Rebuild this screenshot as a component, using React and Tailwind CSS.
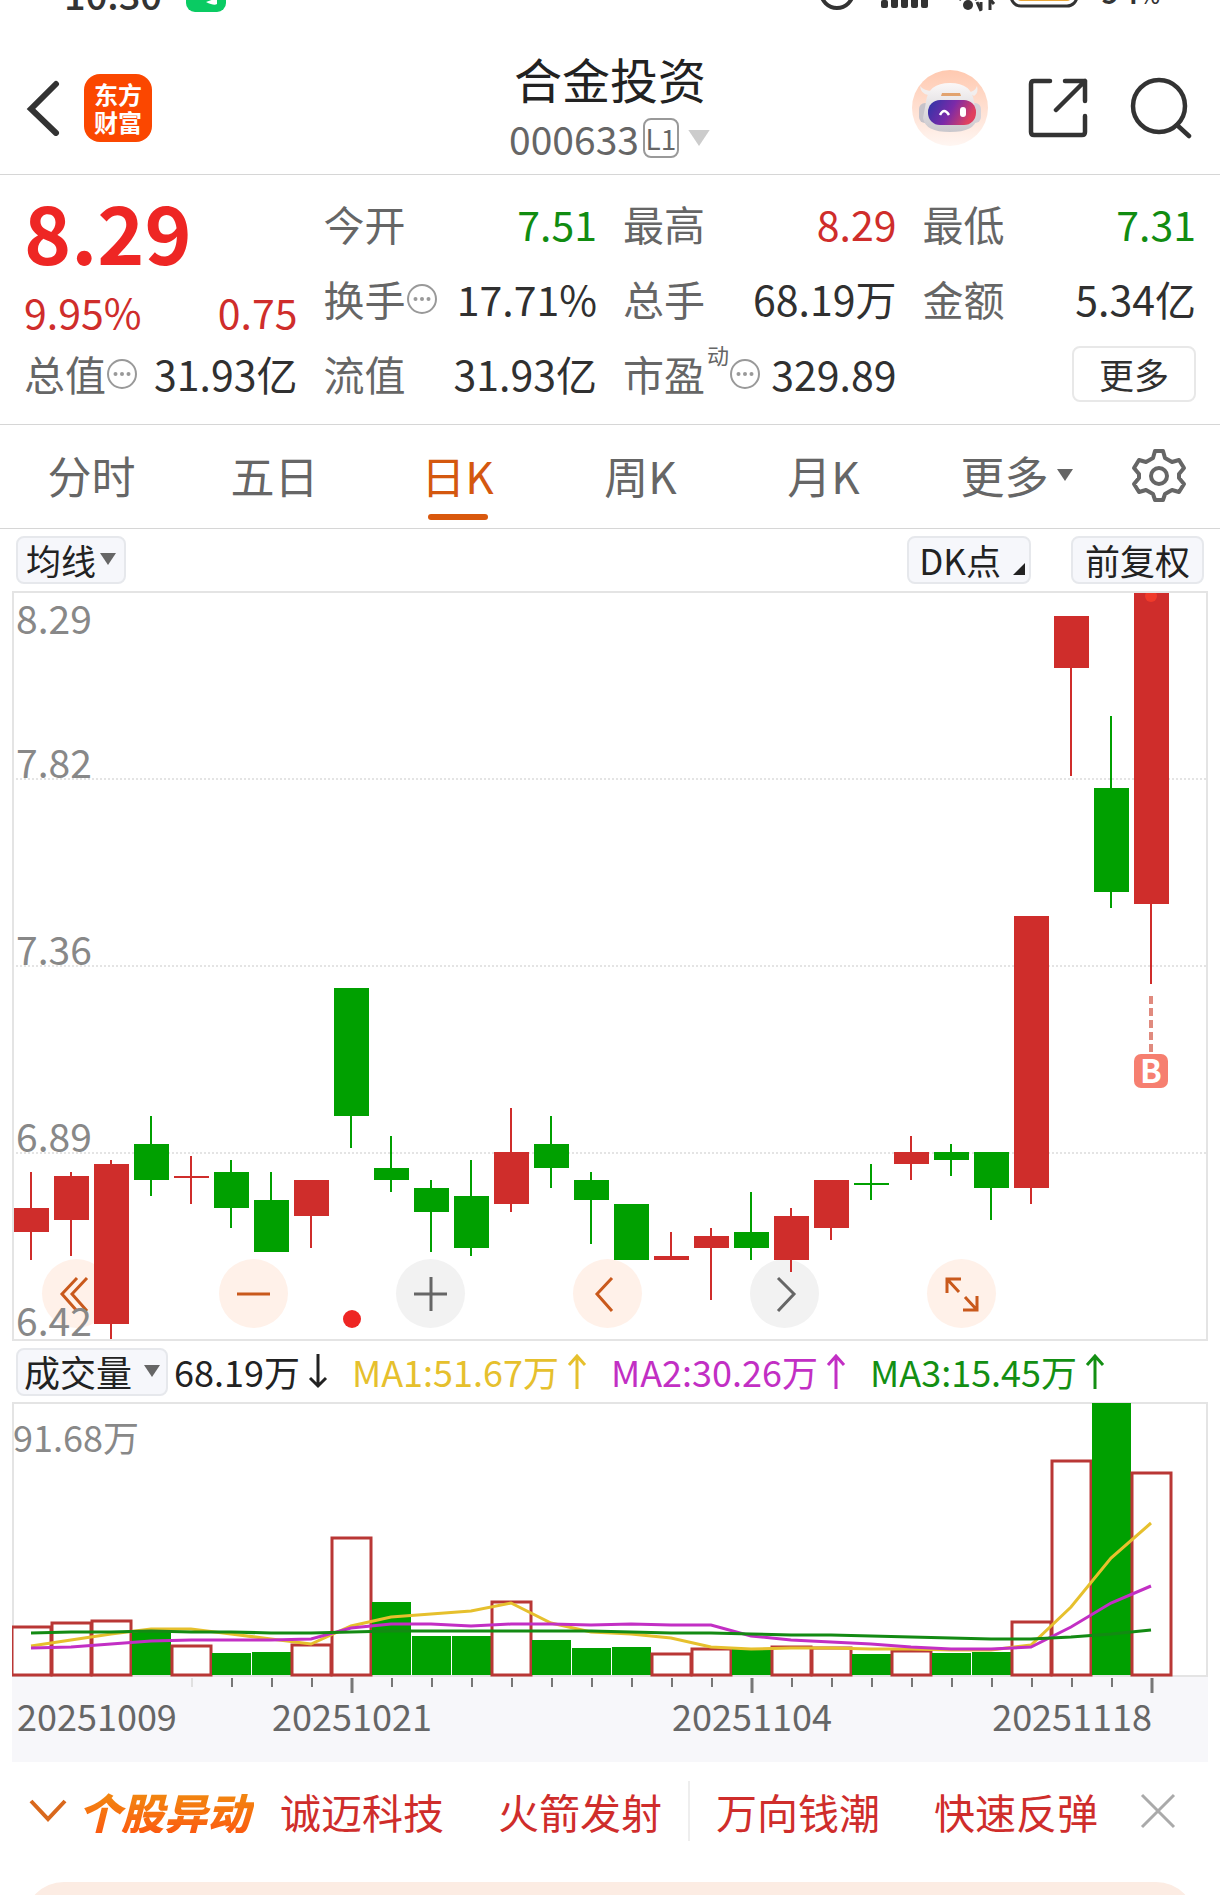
import { useState } from "react";

const RED = "#cf2d2b";
const GREEN = "#00a000";

// [open, close, high, low]
const candles = [
  [6.69, 6.75, 6.84, 6.62],
  [6.72, 6.83, 6.84, 6.63],
  [6.46, 6.86, 6.87, 6.42],
  [6.91, 6.82, 6.98, 6.78],
  [6.83, 6.83, 6.88, 6.76],
  [6.84, 6.75, 6.87, 6.7],
  [6.77, 6.64, 6.84, 6.64],
  [6.73, 6.82, 6.82, 6.65],
  [7.3, 6.98, 7.3, 6.9],
  [6.85, 6.82, 6.93, 6.79],
  [6.8, 6.74, 6.82, 6.64],
  [6.78, 6.65, 6.87, 6.63],
  [6.76, 6.89, 7.0, 6.74],
  [6.91, 6.85, 6.98, 6.8],
  [6.82, 6.77, 6.84, 6.66],
  [6.76, 6.62, 6.76, 6.62],
  [6.62, 6.63, 6.69, 6.62],
  [6.65, 6.68, 6.7, 6.52],
  [6.69, 6.65, 6.79, 6.62],
  [6.62, 6.73, 6.75, 6.59],
  [6.7, 6.82, 6.82, 6.67],
  [6.812, 6.808, 6.86, 6.77],
  [6.86, 6.89, 6.93, 6.82],
  [6.89, 6.87, 6.91, 6.83],
  [6.89, 6.8, 6.89, 6.72],
  [6.8, 7.48, 7.48, 6.76],
  [8.1, 8.23, 8.23, 7.83],
  [7.8, 7.54, 7.98, 7.5],
  [7.51, 8.29, 8.29, 7.31],
];

const volumes = [
  49, 53, 55, 43, 30, 22, 23, 31, 138, 73, 39, 39, 74, 35, 27, 28, 22, 27, 26,
  29, 28, 21, 25, 22, 23, 54, 215, 272, 203,
];

const averages = [
  {
    color: "#e6c02d",
    values: [
      29, 35, 41, 46, 46, 41, 36, 31, 49, 58, 61, 64, 72, 52, 43, 41, 37, 28, 26,
      27, 27, 26, 26, 25, 25, 30, 68, 117, 152,
    ],
  },
  {
    color: "#c22fc4",
    values: [
      27, 28, 31, 34, 35, 35, 35, 36, 47, 51, 51, 49, 51, 51, 50, 51, 50, 50, 39,
      35, 33, 31, 28, 26, 26, 28, 48, 72, 89,
    ],
  },
  {
    color: "#138a13",
    values: [
      42, 43, 43, 44, 43, 43, 42, 42, 43, 44, 44, 44, 44, 44, 44, 43, 42, 42, 41,
      40, 40, 39, 38, 37, 36, 36, 38, 41, 45,
    ],
  },
];

const columns = [
  [
    { label: "今开", value: "7.51", color: "text-[#118c11]" },
    { label: "换手", value: "17.71%", info: true },
    { label: "流值", value: "31.93亿" },
  ],
  [
    { label: "最高", value: "8.29", color: "text-[#cf2d2b]" },
    { label: "总手", value: "68.19万" },
    { label: "市盈", value: "329.89", info: true, sup: "动" },
  ],
  [
    { label: "最低", value: "7.31", color: "text-[#118c11]" },
    { label: "金额", value: "5.34亿" },
  ],
];

const tabs = ["分时", "五日", "日K", "周K", "月K"];

const centerX = (i) => 19 + i * 40;
const priceY = (price) => Math.round((8.29 - price) * 400);

// volume bars are coloured by the change from the previous close
const isUp = (i) => i === 0 || candles[i][1] > candles[i - 1][1];

const InfoIcon = () => (
  <svg className="h-8 w-8 shrink-0" viewBox="0 0 32 32" fill="#999">
    <circle cx="16" cy="16" r="14" fill="none" stroke="#999" strokeWidth="2" />
    <circle cx="9.5" cy="16" r="2" />
    <circle cx="16" cy="16" r="2" />
    <circle cx="22.5" cy="16" r="2" />
  </svg>
);

const Triangle = ({ className }) => (
  <svg className={className} viewBox="0 0 16 12" fill="currentColor">
    <path d="M0 0h16L8 12z" />
  </svg>
);

const Arrow = ({ down }) => (
  <svg
    className="ml-2 h-9 w-5"
    viewBox="0 0 20 36"
    fill="none"
    stroke="currentColor"
    strokeWidth="3"
  >
    {down ? <path d="M10 1v32M2 25l8 8 8-8" /> : <path d="M10 36V3M2 12l8-9 8 9" />}
  </svg>
);

const Stat = ({ label, value, color = "text-[#303030]", info, sup }) => (
  <div className="flex items-center justify-between">
    <span className="flex items-center text-[#666]">
      {label}
      {sup && <sup className="-top-5 ml-0.5 text-[22px] leading-none">{sup}</sup>}
      {info && <InfoIcon />}
    </span>
    <span className={color}>{value}</span>
  </div>
);

const StatusBar = () => (
  <div className="flex h-3.5 items-end justify-between overflow-hidden pr-15 pl-16 text-[#333]">
    <div className="flex items-end gap-6">
      <span className="pb-0.5 text-[38px] leading-9 font-medium">10:30</span>
      <svg className="h-10 w-10 pb-0.5" viewBox="0 0 40 38">
        <rect width="40" height="38" rx="9" fill="#0acb63" />
        <path d="M20 28q8 4 11 2v-6" fill="#fff" />
      </svg>
    </div>
    <div className="flex items-end gap-5">
      <svg className="h-14 w-[266px]" viewBox="0 0 266 56" fill="#333">
        <circle cx="22" cy="34" r="16" fill="none" stroke="#333" strokeWidth="4" />
        <path d="M22 40h9" stroke="#333" strokeWidth="4" />
        <rect x="66" y="42" width="7" height="8" rx="2" />
        <rect x="76" y="36" width="7" height="14" rx="2" />
        <rect x="86" y="30" width="7" height="20" rx="2" />
        <rect x="96" y="24" width="7" height="26" rx="2" />
        <rect x="106" y="18" width="7" height="32" rx="2" />
        <path d="M141 38q11-9 24 0l-4 5q-8-6-16 0z" />
        <circle cx="153" cy="47" r="5" />
        <path d="M166 44v8M162 44l4 9M175 42v10M179 46l-4-5" stroke="#333" strokeWidth="3" />
        <rect x="196" y="20" width="66" height="28" rx="10" fill="none" stroke="#333" strokeWidth="3" />
        <rect x="201" y="25" width="56" height="18" rx="5" fill="#e9a83b" />
      </svg>
      <span className="pb-0.5 text-[34px] leading-9 font-medium">
        94<span className="text-[22px]">%</span>
      </span>
    </div>
  </div>
);

const Header = () => (
  <header className="grid h-[161px] grid-cols-3 items-center border-b border-[#d6d6d6] px-6 pt-7">
    <div className="flex items-center gap-6">
      <button aria-label="返回" className="w-9">
        <svg viewBox="0 0 36 56" fill="none" stroke="#333" strokeWidth="6" strokeLinecap="round">
          <path d="M32 4L7 29l25 24" />
        </svg>
      </button>
      <a
        href="#home"
        className="flex h-17 w-17 flex-col items-center justify-center rounded-2xl bg-[#fb4700] text-2xl leading-7 font-bold text-white"
      >
        <span>东方</span>
        <span>财富</span>
      </a>
    </div>

    <div className="flex flex-col items-center">
      <h1 className="text-5xl leading-15 text-[#222]">合金投资</h1>
      <button className="flex items-center text-[39px] leading-15 text-[#666]">
        000633
        <span className="ml-1 flex h-10 w-9 items-center justify-center rounded-lg border-2 border-[#999] text-[28px]">
          L1
        </span>
        <Triangle className="ml-2 h-4 w-6 text-[#ccc]" />
      </button>
    </div>

    <div className="flex items-center justify-end gap-10 pr-1">
      <button aria-label="智能助手">
        <svg className="h-19 w-19" viewBox="0 0 76 76">
          <defs>
            <linearGradient id="halo" x1="0" y1="0" x2="0" y2="1">
              <stop offset="0" stopColor="#ffc9b0" />
              <stop offset="1" stopColor="#fff6f2" />
            </linearGradient>
            <linearGradient id="visor" x1="0" y1="0" x2="1" y2="0.3">
              <stop offset="0" stopColor="#2b35a8" />
              <stop offset="0.55" stopColor="#7b2aa8" />
              <stop offset="1" stopColor="#e0405f" />
            </linearGradient>
            <linearGradient id="shell" x1="0" y1="0" x2="0" y2="1">
              <stop offset="0" stopColor="#fbf8f8" />
              <stop offset="1" stopColor="#c9c7cc" />
            </linearGradient>
          </defs>
          <circle cx="38" cy="38" r="38" fill="url(#halo)" />
          <path d="M8 16q1 8 8 9l5-4q-9 0-13-5zM65 16q2 7-3 10l-6-4q7 0 9-6z" fill="#f2eeee" />
          <rect x="7" y="33" width="12" height="20" rx="6" fill="#c6c3ca" />
          <rect x="57" y="33" width="12" height="20" rx="6" fill="#d6d2d8" />
          <path d="M14 32q2-19 24-19t24 19l3 16q-2 14-27 14t-27-14z" fill="url(#shell)" />
          <path d="M30 23h18l1 3H29z" fill="#e2a36f" />
          <rect x="16" y="30" width="48" height="25" rx="12" fill="url(#visor)" />
          <path d="M28 45q4-8 9 0" fill="none" stroke="#fff" strokeWidth="2.5" />
          <rect x="48" y="37" width="6" height="10" rx="3" fill="#fff" />
        </svg>
      </button>
      <button aria-label="分享">
        <svg
          className="h-15 w-15"
          viewBox="0 0 60 60"
          fill="none"
          stroke="#333"
          strokeWidth="4.5"
          strokeLinecap="round"
          strokeLinejoin="round"
        >
          <path d="M22 3H6q-3 0-3 3v48q0 3 3 3h48q3 0 3-3V38M37 3h20v20M57 3L28 32" />
        </svg>
      </button>
      <button aria-label="搜索">
        <svg
          className="h-16 w-16"
          viewBox="0 0 64 64"
          fill="none"
          stroke="#333"
          strokeWidth="4.5"
          strokeLinecap="round"
        >
          <circle cx="31" cy="30" r="26" />
          <path d="M49 49l12 11" />
        </svg>
      </button>
    </div>
  </header>
);

const Quote = () => (
  <section className="grid grid-flow-col grid-cols-4 grid-rows-[75px_75px_75px] gap-x-[26px] border-b border-[#d6d6d6] px-6 pt-[11px] pb-[13px] text-[41px] leading-none">
    <div className="row-span-2 flex flex-col justify-between pt-1 pb-1 text-[#cf2d2b]">
      <strong className="text-[80px] leading-20 font-bold text-[#ee2624]">8.29</strong>
      <div className="flex justify-between">
        <span>9.95%</span>
        <span>0.75</span>
      </div>
    </div>
    <Stat label="总值" value="31.93亿" info />
    {columns.flat().map((item) => (
      <Stat key={item.label} {...item} />
    ))}
    <div className="flex items-center justify-end">
      <button className="h-14 w-31 rounded-lg border-2 border-[#e8e8e8] text-[35px] text-[#303030]">
        更多
      </button>
    </div>
  </section>
);

const PriceChart = () => (
  <div className="relative border-2 border-[#e4e4e4]">
    <div className="absolute bottom-[11px] left-7 flex gap-27">
      {[
        { name: "最左", orange: true, d: "M35 19L20 35l15 17M45 19L30 35l15 17" },
        { name: "缩小", orange: true, d: "M18 35h33" },
        { name: "放大", orange: false, d: "M18 35h33M35 18v34" },
        { name: "左移", orange: true, d: "M39 19L24 35l15 17" },
        { name: "右移", orange: false, d: "M28 19l16 16-16 17" },
        { name: "全屏", orange: true, d: "M20 34V20h14M20 20l12 13M50 37v14H36M50 51L38 38" },
      ].map((item) => (
        <button
          key={item.name}
          aria-label={item.name}
          className={
            item.orange
              ? "rounded-full bg-[#fff1e9] text-[#c9591c]"
              : "rounded-full bg-[#f2f2f2] text-[#666]"
          }
        >
          <svg className="h-[69px] w-[69px]" viewBox="0 0 69 69" fill="none" stroke="currentColor" strokeWidth="3">
            <path d={item.d} />
          </svg>
        </button>
      ))}
    </div>
    <svg className="pointer-events-none relative block w-full" viewBox="2 1 1192 746">
      {[187, 374, 561].map((y) => (
        <path key={y} d={`M0 ${y}h1195`} stroke="#e4e4e4" strokeWidth="2" strokeDasharray="2 2" />
      ))}
      {candles.map(([open, close, high, low], i) => {
        const top = priceY(Math.max(open, close));
        const height = Math.max(priceY(Math.min(open, close)) - top, 2);
        return (
          <g key={i} fill={close >= open ? RED : GREEN}>
            <rect x={centerX(i) - 1} y={priceY(high)} width="2" height={priceY(low) - priceY(high)} />
            <rect x={centerX(i) - 17} y={top} width="35" height={height} />
          </g>
        );
      })}
      <circle cx="1139" cy="4" r="6" fill="#f03a2a" />
      <circle cx="340" cy="727" r="9" fill="#ee2624" />
      <path d="M1139 404v56" stroke="#e08a7e" strokeWidth="4" strokeDasharray="8 4" />
      <rect x="1122" y="462" width="34" height="34" rx="7" fill="#f67f70" />
      <text x="1139" y="491" textAnchor="middle" fontSize="32" fontWeight="700" fill="#fff">
        B
      </text>
      <g fontSize="39" fill="#888">
        <text x="4" y="42">8.29</text>
        <text x="4" y="186">7.82</text>
        <text x="4" y="373">7.36</text>
        <text x="4" y="560">6.89</text>
        <text x="4" y="744">6.42</text>
      </g>
    </svg>
  </div>
);

const VolumeChart = () => (
  <svg className="block w-full" viewBox="0 0 1196 360">
    <rect x="0" y="275" width="1196" height="85" fill="#f7f7fa" />
    <rect x="1" y="1" width="1194" height="273" fill="none" stroke="#e4e4e4" strokeWidth="2" />
    <text x="1" y="50" fontSize="36" fill="#888">
      91.68万
    </text>
    {volumes.map((volume, i) =>
      isUp(i) ? (
        <rect
          key={i}
          x={centerX(i) - 19}
          y={274 - volume}
          width="39"
          height={volume - 1}
          fill="#fff"
          stroke="#b93735"
          strokeWidth="3"
        />
      ) : (
        <rect key={i} x={centerX(i) - 19} y={273 - volume} width="39" height={volume} fill={GREEN} />
      )
    )}
    {averages.map((line) => (
      <polyline
        key={line.color}
        points={line.values.map((value, i) => `${centerX(i)},${273 - value}`).join(" ")}
        fill="none"
        stroke={line.color}
        strokeWidth="3"
      />
    ))}
    {volumes.map(
      (_, i) =>
        i > 3 && (
          <path
            key={i}
            d={i % 10 === 8 ? `M${centerX(i) + 1} 276v15` : `M${centerX(i) + 1} 276v9`}
            stroke={i === 4 ? "#e0e0e0" : "#777"}
            strokeWidth={i % 10 === 8 ? 3 : 2}
          />
        )
    )}
    <g fontSize="36" fill="#666">
      <text x="5" y="329">20251009</text>
      <text x="340" y="329" textAnchor="middle">20251021</text>
      <text x="740" y="329" textAnchor="middle">20251104</text>
      <text x="1140" y="329" textAnchor="end">20251118</text>
    </g>
  </svg>
);

const App = () => {
  const [activeTab, setActiveTab] = useState("日K");

  return (
    <div className="bg-white font-['Noto_Sans_CJK_SC',sans-serif]">
      <StatusBar />
      <Header />
      <Quote />

      <nav className="flex h-26 border-b border-[#d6d6d6] text-[44px] text-[#666]">
        {tabs.map((tab) => (
          <button
            key={tab}
            onClick={() => setActiveTab(tab)}
            className={
              tab === activeTab
                ? "relative flex-3 pb-1 text-[#d4580f]"
                : "relative flex-3 pb-1"
            }
          >
            {tab}
            {tab === activeTab && (
              <span className="absolute bottom-2 left-1/2 h-1.5 w-15 -translate-x-1/2 rounded-full bg-[#d9580d]" />
            )}
          </button>
        ))}
        <button className="flex flex-3 items-center justify-center pb-1">
          <span className="ml-5 flex items-center gap-2">
            更多
            <Triangle className="h-3 w-4" />
          </span>
        </button>
        <button aria-label="设置" className="flex flex-2 items-center justify-center pb-1">
          <svg
            className="h-14 w-14"
            viewBox="0 0 56 56"
            fill="none"
            stroke="#666"
            strokeWidth="4"
            strokeLinejoin="round"
          >
            <path d="M24 4h8l2 7 7 4 7-2 5 8-5 6v4l5 6-5 8-7-2-7 4-2 6h-8l-2-6-7-4-7 2-5-8 5-6v-4l-5-6 5-8 7 2 7-4z" />
            <circle cx="28" cy="29" r="8" />
          </svg>
        </button>
      </nav>

      <div className="flex h-[62px] items-center justify-between px-4 text-[35px] leading-none text-[#222]">
        <button className="flex h-12 items-center gap-1 rounded-lg border-2 border-[#e6e8ec] bg-[#f6f7fb] px-2 pb-0.5">
          均线
          <Triangle className="h-3 w-4 text-[#666]" />
        </button>
        <div className="flex gap-10">
          <button className="flex h-12 items-center gap-3 rounded-lg border-2 border-[#e6e8ec] bg-[#f6f7fb] pr-1 pb-0.5 pl-2.5">
            DK点
            <svg className="mt-5 h-3 w-3" viewBox="0 0 12 12" fill="#222">
              <path d="M12 0v12H0z" />
            </svg>
          </button>
          <button className="h-12 rounded-lg border-2 border-[#e6e8ec] bg-[#f6f7fb] px-3 pb-0.5">
            前复权
          </button>
        </div>
      </div>

      <main className="px-3">
        <PriceChart />
        <div className="flex h-[61px] items-center pl-1 text-[36px] leading-none">
          <button className="mr-1.5 flex h-12 items-center gap-3 rounded-lg border-2 border-[#e6e8ec] bg-[#f6f7fb] px-1.5 pb-0.5 text-[#222]">
            成交量
            <Triangle className="h-3 w-4 text-[#666]" />
          </button>
          <span className="flex items-center pb-0.5 text-[#222]">
            68.19万
            <Arrow down />
          </span>
          <span className="ml-6 flex items-center pb-0.5 text-[#e6c02d]">
            MA1:51.67万
            <Arrow />
          </span>
          <span className="ml-6 flex items-center pb-0.5 text-[#c22fc4]">
            MA2:30.26万
            <Arrow />
          </span>
          <span className="ml-6 flex items-center pb-0.5 text-[#138f13]">
            MA3:15.45万
            <Arrow />
          </span>
        </div>
        <VolumeChart />
      </main>

      <section className="flex h-[98px] items-center justify-between pr-11 pl-7 text-[41px] leading-none text-[#cf2d2b]">
        <button className="flex items-center gap-2.5">
          <svg className="h-6 w-10" viewBox="0 0 40 24" fill="none" stroke="#d9681c" strokeWidth="4">
            <path d="M3 2l17 18L37 2" />
          </svg>
          <span className="bg-linear-to-b from-[#f08a10] to-[#fb5a10] bg-clip-text pr-1 text-[43px] font-black text-transparent italic">
            个股异动
          </span>
        </button>
        <a href="#300598">诚迈科技</a>
        <a href="#300598" className="pl-7">火箭发射</a>
        <span className="h-15 w-0.5 bg-[#eee]" />
        <a href="#000559">万向钱潮</a>
        <a href="#000559" className="pl-7">快速反弹</a>
        <button aria-label="关闭" className="pl-4">
          <svg className="h-9 w-9" viewBox="0 0 36 36" fill="none" stroke="#aaa" strokeWidth="3">
            <path d="M2 2l32 32M34 2L2 34" />
          </svg>
        </button>
      </section>

      <div className="mt-[22px] h-3.5 overflow-hidden px-6">
        <div className="h-24 rounded-t-[40px] bg-[#fcece3]" />
      </div>
    </div>
  );
};

export default App;
